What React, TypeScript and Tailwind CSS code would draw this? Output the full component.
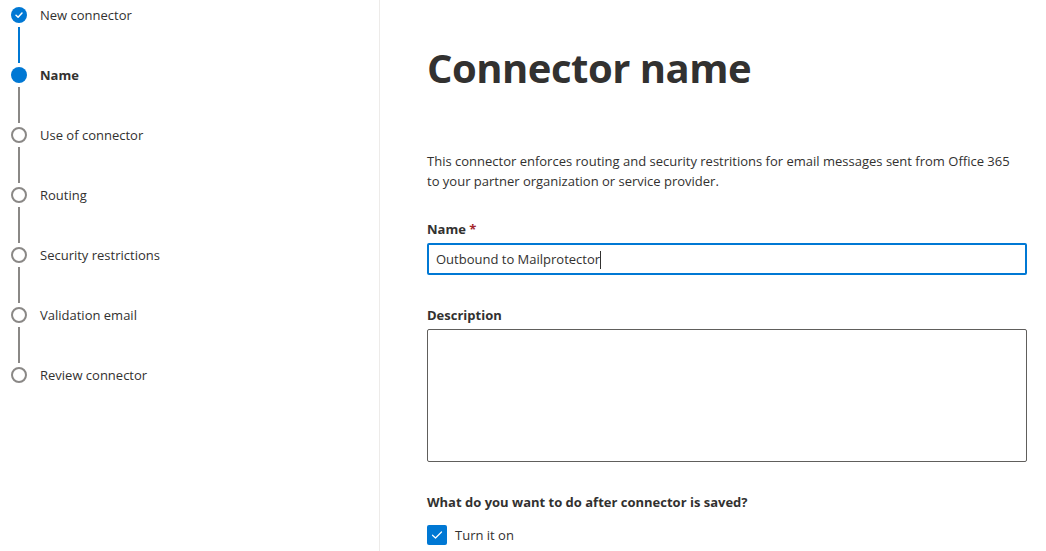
import React from 'react';

const steps = [
  { label: 'New connector', state: 'done' },
  { label: 'Name', state: 'current' },
  { label: 'Use of connector', state: 'todo' },
  { label: 'Routing', state: 'todo' },
  { label: 'Security restrictions', state: 'todo' },
  { label: 'Validation email', state: 'todo' },
  { label: 'Review connector', state: 'todo' },
];

function StepCircle({ state }: { state: string }) {
  if (state === 'done') {
    return (
      <div className="w-[16px] h-[16px] rounded-full bg-[#0078d4] flex items-center justify-center">
        <svg width="10" height="10" viewBox="0 0 10 10" fill="none">
          <path d="M2 5.2 L4.1 7.2 L8 3" stroke="white" strokeWidth="1.5" strokeLinecap="round" strokeLinejoin="round" />
        </svg>
      </div>
    );
  }
  if (state === 'current') {
    return <div className="w-[16px] h-[16px] rounded-full bg-[#0078d4]" />;
  }
  return <div className="w-[16px] h-[16px] rounded-full border-2 border-[#8a8886] bg-white" />;
}

export default function App() {
  return (
    <div
      className="flex w-[1046px] h-[551px] bg-white text-[#323130] overflow-hidden"
      style={{ fontFamily: '"Segoe UI", "Open Sans", "Noto Sans", sans-serif' }}
    >
      {/* Steps */}
      <div className="w-[380px] shrink-0 border-r border-[#edebe9] pt-[7px] pl-[11px]">
        {steps.map((step, i) => (
          <div key={step.label} className="flex gap-[13px]">
            <div className="w-[16px] flex flex-col items-center">
              <StepCircle state={step.state} />
              {i < steps.length - 1 && (
                <div
                  className={`w-[2px] h-[36px] my-[4px] ${
                    step.state === 'done' ? 'bg-[#0078d4]' : 'bg-[#8a8886]'
                  }`}
                />
              )}
            </div>
            <div
              className={`text-[13px] leading-[16px] ${
                step.state === 'current' ? 'font-bold' : ''
              }`}
            >
              {step.label}
            </div>
          </div>
        ))}
      </div>

      {/* Form */}
      <div className="flex-1 pl-[47px] pt-[41px]">
        <h1 className="text-[40px] leading-[54px] font-bold tracking-[-0.5px]">Connector name</h1>

        <p className="mt-[56px] text-[13px] leading-[20px]">
          This connector enforces routing and security restritions for email messages sent from Office 365
          <br />
          to your partner organization or service provider.
        </p>

        <div className="mt-[28px] text-[13px] leading-[20px] font-bold">
          Name <span className="text-[#a4262c]">*</span>
        </div>
        <div className="mt-[4px] w-[600px] h-[32px] border-2 border-[#0078d4] rounded-[2px] flex items-center px-[7px] pt-[2px] text-[13px]">
          Outbound to Mailprotector
          <span className="inline-block w-[1px] h-[18px] bg-[#323130]" />
        </div>

        <div className="mt-[30px] text-[13px] leading-[20px] font-bold">Description</div>
        <div className="mt-[4px] w-[600px] h-[133px] border border-[#605e5c] rounded-[2px]" />

        <div className="mt-[30px] text-[13px] leading-[20px] font-bold">
          What do you want to do after connector is saved?
        </div>
        <div className="mt-[13px] flex items-center gap-[8px]">
          <div className="w-[20px] h-[20px] rounded-[2px] bg-[#0078d4] flex items-center justify-center">
            <svg width="12" height="12" viewBox="0 0 12 12" fill="none">
              <path d="M1.5 6.2 L4.5 9 L10.5 3" stroke="white" strokeWidth="1.2" strokeLinecap="round" strokeLinejoin="round" />
            </svg>
          </div>
          <span className="text-[13px] leading-[20px]">Turn it on</span>
        </div>
      </div>
    </div>
  );
}
